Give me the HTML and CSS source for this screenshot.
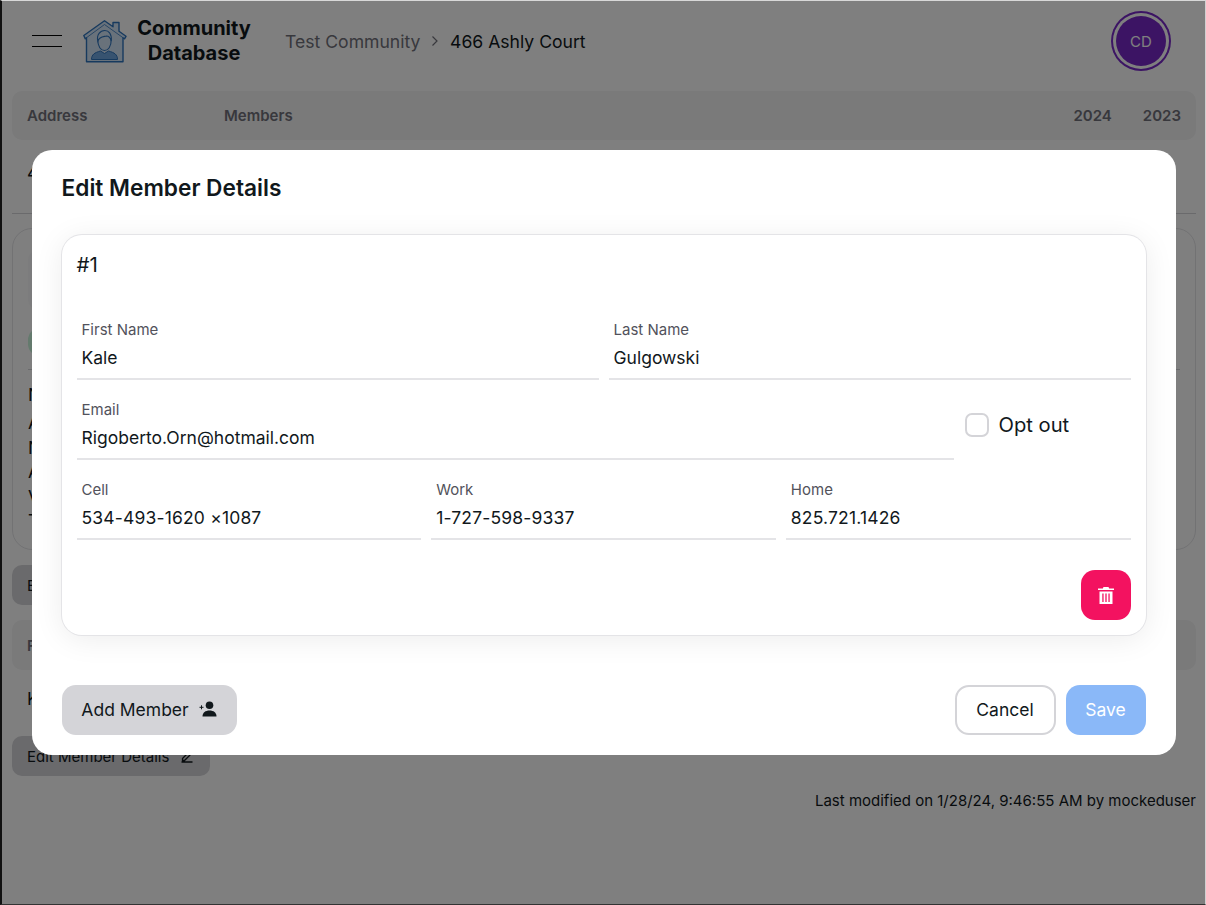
FILE: index.html
```html
<!DOCTYPE html>
<html lang="en">
<head>
<meta charset="utf-8">
<title>Community Database</title>
<link rel="stylesheet" href="styles.css">
</head>
<body>
<div class="app">
  <header class="topbar">
    <button class="burger" aria-label="Menu"><span></span><span></span></button>
    <svg class="logo" viewBox="0 0 44 44" width="44" height="44" aria-hidden="true">
      <path d="M.8 15.500 21.500.8 30 6.800V2.500h6V11.200L43 16.300 41.500 18.800 40 17.700V41.800H3.500V17.700L2.200 18.800z" fill="#d3e5f7" stroke="#2f74bd" stroke-width="1.400" stroke-linejoin="round"/>
      <path d="M3.500 17.700 21.500 4.500 40 17.700" fill="none" stroke="#2f74bd" stroke-width=".8"/>
      <path d="M8.500 39.500c0-5 3-6.800 9-8.500l4 2.500 4-2.500c6 1.700 9 3.500 9 8.500z" fill="#6ea6e0" stroke="#2f74bd"/>
      <path d="M14.800 20c0 6.500 3 10.500 6.700 10.500s6.700-4 6.700-10.500c0-4-3-6-6.700-6s-6.700 2-6.700 6z" fill="#d3e5f7" stroke="#2f74bd" stroke-width="1.100"/>
      <path d="M14.800 21c-1.500-6.500 2.500-10.500 7-10.500 4 0 7.200 3.500 6.400 10.500-.8-3-2.500-5-4.700-5-3 .8-7 .3-8.700 5z" fill="#d3e5f7" stroke="#2f74bd" stroke-width="1.100"/>
    </svg>
    <div class="brand">Community<br>Database</div>
    <nav class="crumbs">
      <span class="crumb-muted">Test Community</span>
      <svg class="crumb-sep" viewBox="0 0 10 12" width="10" height="12" aria-hidden="true"><path d="M2.500 1.500 7 6l-4.500 4.500" fill="none" stroke="#71717a" stroke-width="1.200"/></svg>
      <span class="crumb-current">466 Ashly Court</span>
    </nav>
    <div class="avatar">CD</div>
  </header>

  <main class="content">
    <div class="thead">
      <span class="col-address">Address</span>
      <span class="col-members">Members</span>
      <span class="col-year">2024</span>
      <span class="col-year2">2023</span>
    </div>
    <div class="trow">466 Ashly Court</div>
    <div class="divider"></div>

    <section class="details">
      <div class="details-head"></div>
      <div class="chip"></div>
      <div class="details-rule"></div>
      <ul class="details-list">
        <li class="details-lead">Name</li>
        <li>Address</li>
        <li>Notes</li>
        <li>Amount</li>
        <li>Visited</li>
        <li>Total</li>
      </ul>
    </section>

    <button class="ghost-btn edit-top">Edit</button>
    <div class="thead thead-small"><span class="col-address">First Name</span></div>
    <div class="trow trow-small">Kale</div>
    <button class="ghost-btn edit-members">
      Edit Member Details
      <svg viewBox="0 0 14 14" width="14" height="14" aria-hidden="true"><path d="M2.500 9.500 9.500 2.500l2 2-7 7H2.500zM1.500 13h11" fill="none" stroke="#11181c" stroke-width="1.300"/></svg>
    </button>
    <p class="modified">Last modified on 1/28/24, 9:46:55 AM by mockeduser</p>
  </main>

  <div class="overlay">
    <div class="modal">
      <h2 class="modal-title">Edit Member Details</h2>
      <div class="modal-body">
        <div class="member-card">
          <div class="member-num">#1</div>
          <div class="field-row">
            <label class="field"><span class="field-label">First Name</span><span class="field-value">Kale</span></label>
            <label class="field"><span class="field-label">Last Name</span><span class="field-value">Gulgowski</span></label>
          </div>
          <div class="field-row">
            <label class="field"><span class="field-label">Email</span><span class="field-value">Rigoberto.Orn@hotmail.com</span></label>
            <div class="optout"><span class="checkbox"></span><span class="optout-text">Opt out</span></div>
          </div>
          <div class="field-row">
            <label class="field"><span class="field-label">Cell</span><span class="field-value field-phone">534-493-1620 ×1087</span></label>
            <label class="field"><span class="field-label">Work</span><span class="field-value field-phone">1-727-598-9337</span></label>
            <label class="field"><span class="field-label">Home</span><span class="field-value field-phone">825.721.1426</span></label>
          </div>
          <div class="card-actions">
            <button class="icon-btn" aria-label="Delete">
              <svg viewBox="0 0 16 17" width="16" height="17" aria-hidden="true">
                <path d="M5.500 0h5l.7 1.400H16v1.600H0V1.400h4.800z" fill="#fff"/>
                <path d="M1.500 4.500h13V17h-13zM4.300 6.500v8.500h1.300V6.500zM7.350 6.500v8.500h1.300V6.500zM10.400 6.500v8.500h1.300V6.500z" fill="#fff" fill-rule="evenodd"/>
              </svg>
            </button>
          </div>
        </div>
      </div>
      <footer class="modal-foot">
        <button class="btn btn-add">
          Add Member
          <svg viewBox="0 0 18 16" width="18" height="16" aria-hidden="true">
            <circle cx="10.500" cy="4.300" r="3.800" fill="#11181c"/>
            <path d="M3.500 15.500c0-4 3-6 7-6s7 2 7 6z" fill="#11181c"/>
            <path d="M0.500 6.300h4M2.500 4.300v4" stroke="#11181c" stroke-width="1" fill="none"/>
          </svg>
        </button>
        <div class="foot-right">
          <button class="btn btn-cancel">Cancel</button>
          <button class="btn btn-save">Save</button>
        </div>
      </footer>
    </div>
  </div>
</div>
</body>
</html>
```
FILE: styles.css
```css
* { box-sizing: border-box; }
html, body { margin: 0; padding: 0; }
body {
  font-family: Inter, "Noto Sans", sans-serif;
  color: #11181c;
  background: #fff;
}
button { font-family: inherit; }

.app {
  position: relative;
  width: 1206px;
  height: 905px;
  overflow: hidden;
  background: #fff;
  border-style: solid;
  border-color: #d8d8d8 #d0d0d0 #333 #111;
  border-width: 1px 1px 1px 2px;
}

.topbar {
  display: flex;
  align-items: center;
  height: 82px;
  padding-left: 30px;
  padding-bottom: 2px;
}
.burger {
  display: flex;
  flex-direction: column;
  gap: 10px;
  width: 30px;
  padding: 0;
  border: 0;
  background: none;
}
.burger span { display: block; height: 1px; background: #000; }
.logo { margin-left: 21px; margin-top: 1px; }
.brand {
  width: 134px;
  text-align: center;
  font-size: 20px;
  line-height: 25px;
  font-weight: 700;
}
.crumbs { display: flex; align-items: center; margin-left: 24px; font-size: 17.600px; }
.crumb-muted { color: #71717a; }
.crumb-sep { margin: 0 10px 0 9.500px; }
.avatar {
  display: flex;
  align-items: center;
  justify-content: center;
  width: 50px;
  height: 50px;
  margin-left: auto;
  margin-right: 39px;
  border-radius: 50%;
  background: #7828c8;
  color: #fff;
  font-size: 15px;
  box-shadow: 0 0 0 3px #fff, 0 0 0 5px #7828c8;
}

.content { padding: 8px 9px 0 10px; }
.thead {
  display: flex;
  align-items: center;
  height: 49px;
  padding-left: 15px;
  border-radius: 10px;
  background: #f4f4f5;
  color: #71717a;
  font-size: 15px;
  font-weight: 600;
}
.col-address { width: 197px; }
.col-year { margin-left: auto; }
.col-year2 { margin-left: 31px; margin-right: 15px; }
.trow { height: 73px; padding: 22px 0 0 15px; font-size: 17.500px; }
.divider { height: 1px; background: #d4d4d8; }

.details {
  height: 322px;
  margin-top: 14px;
  padding: 21px 15px 0;
  border: 1px solid #e4e4e7;
  border-radius: 20px;
}
.details-head { width: 300px; height: 60px; border-radius: 10px; background: #f9f9fa; }
.chip { width: 120px; height: 28px; margin-top: 18px; border-radius: 12px; background: #c8f5da; }
.details-rule { height: 1px; margin-top: 13px; background: #d4d4d8; }
.details-list { margin: 13px 0 0; padding: 0; list-style: none; font-size: 17.500px; line-height: 24.500px; }
.details-lead { margin-bottom: 3.500px; }

.ghost-btn {
  display: flex;
  align-items: center;
  gap: 11px;
  height: 40px;
  padding: 0 15px;
  border: 0;
  border-radius: 10px;
  background: #d4d4d8;
  color: #11181c;
  font-size: 15px;
  white-space: nowrap;
}
.edit-top { margin-top: 15px; }
.thead-small { height: 50px; margin-top: 15px; }
.trow-small { height: 66px; padding-top: 18px; }
.edit-members { width: 198px; }
.modified { margin: 16px 0 0; text-align: right; font-size: 15px; line-height: 17px; color: #11181c; }

.overlay {
  position: absolute;
  inset: 0;
  display: flex;
  align-items: center;
  justify-content: center;
  background: rgba(0, 0, 0, .5);
}
.modal {
  display: flex;
  flex-direction: column;
  width: 1144px;
  height: 605px;
  border-radius: 20px;
  background: #fff;
}
.modal-title {
  height: 85px;
  margin: 0;
  padding: 24px 30px 0;
  font-size: 22.700px;
  line-height: 28px;
  font-weight: 600;
}
.modal-body { height: 450px; padding: 0 30px; }
.member-card {
  height: 400px;
  padding: 16px 15px 0;
  border-radius: 20px;
  box-shadow: 0 0 0 1px #e4e4e7, 0 4px 30px rgba(0, 0, 0, .08);
  background: #fff;
}
.member-num { height: 64px; font-size: 20.500px; line-height: 28px; }
.field-row { display: flex; gap: 10px; height: 80px; }
.field {
  flex: 1 1 0;
  display: flex;
  flex-direction: column;
  height: 65px;
  padding: 5px 5px 0;
  border-bottom: 2px solid #e4e4e7;
}
.field-label { font-size: 15px; line-height: 20px; color: #52525b; }
.field-value { margin-top: 6px; font-size: 17.500px; line-height: 24px; color: #11181c; }
.field-phone { letter-spacing: .17px; }
.optout { flex: 0 0 167px; display: flex; align-items: center; gap: 10px; height: 52px; padding: 8px 0 0 1px; }
.checkbox { width: 24px; height: 24px; border: 2px solid #d4d4d8; border-radius: 7px; }
.optout-text { font-size: 20.200px; line-height: 28px; }
.card-actions { display: flex; justify-content: flex-end; margin-top: 15px; }
.icon-btn {
  display: flex;
  align-items: center;
  justify-content: center;
  width: 50px;
  height: 50px;
  padding: 0;
  border: 0;
  border-radius: 14px;
  background: #f31260;
}
.modal-foot { display: flex; justify-content: space-between; padding: 0 30px; }
.foot-right { display: flex; gap: 10px; }
.btn {
  display: flex;
  align-items: center;
  justify-content: center;
  height: 50px;
  padding: 0 0 2px;
  border: 0;
  border-radius: 14px;
  font-size: 17.500px;
  color: #11181c;
}
.btn-add { width: 175px; gap: 10px; background: #d4d4d8; }
.btn-cancel { width: 101px; border: 2px solid #d4d4d8; background: #fff; }
.btn-save { width: 80px; background: #8ab8f8; color: #fff; }
```
